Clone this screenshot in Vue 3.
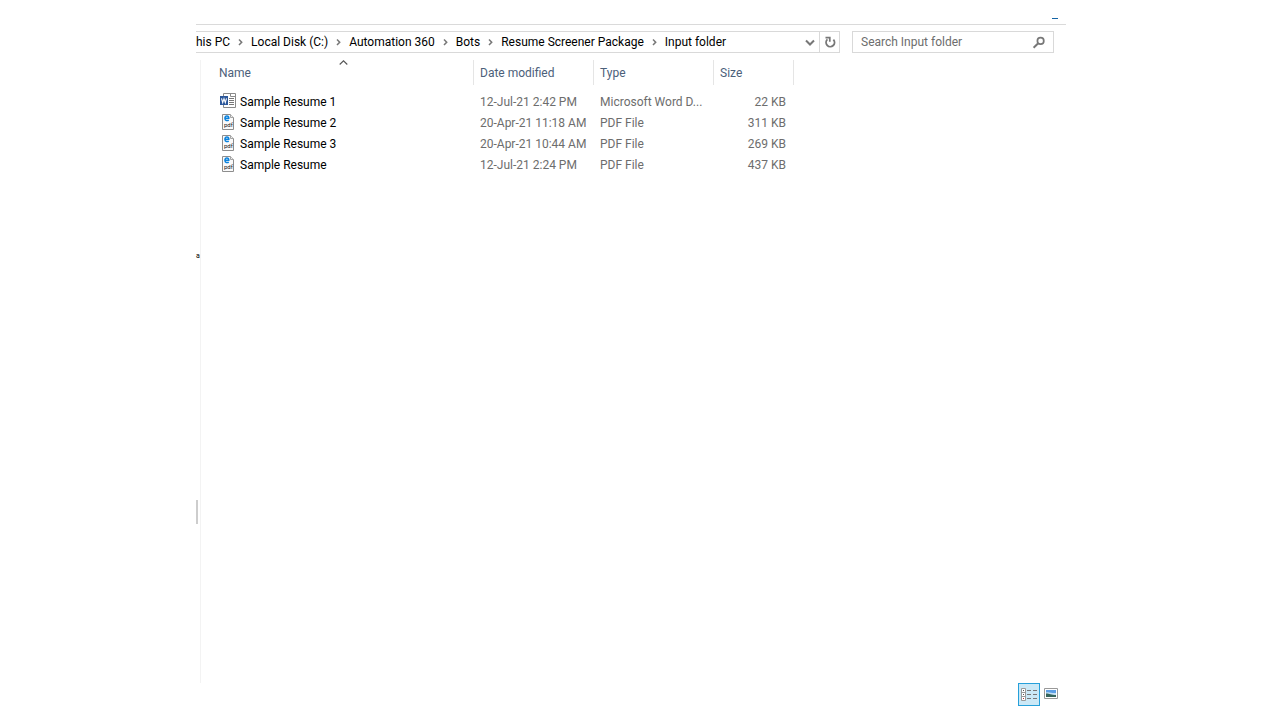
<script setup>
import { ref } from 'vue'

const crumbs = ['his PC', 'Local Disk (C:)', 'Automation 360', 'Bots', 'Resume Screener Package', 'Input folder']
const search = ref('')
const view = ref('details')
const files = [
  { name: 'Sample Resume 1', icon: 'word', date: '12-Jul-21 2:42 PM', type: 'Microsoft Word D...', size: '22 KB' },
  { name: 'Sample Resume 2', icon: 'pdf', date: '20-Apr-21 11:18 AM', type: 'PDF File', size: '311 KB' },
  { name: 'Sample Resume 3', icon: 'pdf', date: '20-Apr-21 10:44 AM', type: 'PDF File', size: '269 KB' },
  { name: 'Sample Resume', icon: 'pdf', date: '12-Jul-21 2:24 PM', type: 'PDF File', size: '437 KB' }
]
</script>

<template>
  <div class="explorer">
    <header class="ribbon">
      <span class="help-edge"></span>
    </header>

    <div class="toolbar">
      <div class="address">
        <nav class="crumbs" aria-label="Path">
          <template v-for="(crumb, i) in crumbs" :key="crumb">
            <svg v-if="i > 0" class="sep" width="7" height="8" viewBox="0 0 7 8">
              <path d="M2 1.5 4.7 4.2 2 7" fill="none" stroke="#777" stroke-width="1.5" />
            </svg>
            <a href="#" class="crumb">{{ crumb }}</a>
          </template>
        </nav>
        <button class="drop" aria-label="Previous locations">
          <svg width="10" height="8" viewBox="0 0 10 8">
            <path d="M1 2.5 5 6.5 9 2.5" fill="none" stroke="#777" stroke-width="2" />
          </svg>
        </button>
        <button class="refresh" aria-label="Refresh">
          <svg width="12" height="12" viewBox="0 0 12 12">
            <path d="M9.4 3.6A4.2 4.2 0 1 1 3.4 3.4" fill="none" stroke="#777" stroke-width="1.9" />
            <path d="M1.5 1.6H5.8V5.8" fill="none" stroke="#777" stroke-width="1.7" />
          </svg>
        </button>
      </div>
      <div class="search">
        <input v-model="search" type="text" placeholder="Search Input folder" aria-label="Search Input folder">
        <svg width="13" height="13" viewBox="0 0 13 13">
          <circle cx="8.6" cy="4.9" r="3.2" fill="none" stroke="#777" stroke-width="1.7" />
          <path d="M6.2 7.3 1.6 11.8" stroke="#777" stroke-width="2" />
        </svg>
      </div>
    </div>

    <main class="body">
      <aside class="tree">
        <span class="tree-text">a</span>
        <span class="tree-thumb"></span>
      </aside>
      <table class="files">
        <colgroup>
          <col class="col-name">
          <col class="col-date">
          <col class="col-type">
          <col class="col-size">
        </colgroup>
        <thead>
          <tr>
            <th class="name">
              Name
              <svg class="sort" width="9" height="5" viewBox="0 0 9 5">
                <path d="M.7 4.5 4.5.8 8.3 4.5" fill="none" stroke="#555" stroke-width="1.1" />
              </svg>
            </th>
            <th>Date modified</th>
            <th>Type</th>
            <th>Size</th>
          </tr>
        </thead>
        <tbody>
          <tr v-for="file in files" :key="file.name">
            <td class="name">
              <div class="file">
                <svg v-if="file.icon === 'word'" width="16" height="17" viewBox="0 0 16 17">
                  <path d="M3.5.5H11L15.5 .5V14.5H3.5Z" fill="#fff" stroke="#8a8a8a" />
                  <path d="M10.5.5V3.5H15.5" fill="none" stroke="#8a8a8a" />
                  <path d="M9 5.5H14M9 7.5H14M9 9.5H14M9 11.5H14" stroke="#777" />
                  <path d="M0 3H8V12H0Z" fill="#2b579a" />
                  <path d="M1.5 5.3 2.7 9.7 4 5.7 5.3 9.7 6.5 5.3" fill="none" stroke="#fff" stroke-width="1.1" />
                </svg>
                <svg v-else width="16" height="17" viewBox="0 0 16 17">
                  <path d="M2.5.5H10.5L13.5 3.5V15.5H2.5Z" fill="#fafafa" stroke="#8d8d8d" />
                  <path d="M10.5.5V3.5H13.5" fill="#eee" stroke="#a5a5a5" />
                  <path d="M5 4.2H8.8C8.8 1.3 4.9 1.2 4.9 4.2 4.9 6.9 7.4 6.9 8.8 6.1" fill="none" stroke="#0b82dc" stroke-width="1.5" />
                  <text x="4" y="13" font-size="6" fill="#111">pdf</text>
                </svg>
                <span>{{ file.name }}</span>
              </div>
            </td>
            <td>{{ file.date }}</td>
            <td>{{ file.type }}</td>
            <td class="size">{{ file.size }}</td>
          </tr>
        </tbody>
      </table>
    </main>

    <footer class="status">
      <button class="view" :class="{ active: view === 'details' }" aria-label="Details" @click="view = 'details'">
        <svg width="16" height="13" viewBox="0 0 16 13">
          <path d="M.5.5H4.5V12.5H.5ZM.5 4.5H4.5M.5 8.5H4.5" fill="#fff" stroke="#999" />
          <path d="M2 2H3V3H2ZM2 6H3V7H2Z" fill="#555" />
          <path d="M2 10H3V11H2Z" fill="#b33" />
          <path d="M6 2.5H10M12 2.5H16M6 6.5H10M12 6.5H16M6 10.5H10M12 10.5H16" stroke="#777" />
        </svg>
      </button>
      <button class="view" :class="{ active: view === 'large' }" aria-label="Large icons" @click="view = 'large'">
        <svg width="14" height="13" viewBox="0 0 14 13">
          <path d="M.5.5H13.5V10.5H.5Z" fill="#fff" stroke="#999" />
          <path d="M2 2H12V9H2Z" fill="#5b9ee6" />
          <path d="M2 4.5C5 3.5 8 5.5 12 5V7H2Z" fill="#c4e0f3" />
          <path d="M2 5.5C5 5.3 7 7 12 7V9H2Z" fill="#35645c" />
        </svg>
      </button>
    </footer>
  </div>
</template>

<style>
body {
  margin: 0;
  background: #fff;
}
</style>

<style scoped>
.explorer {
  display: flex;
  flex-direction: column;
  box-sizing: border-box;
  min-height: 100vh;
  padding: 0 214px 14px 196px;
  font-family: Roboto, "Open Sans", sans-serif;
  font-size: 12px;
  line-height: 16px;
  color: #000;
}
button {
  display: flex;
  align-items: center;
  justify-content: center;
  padding: 0;
  border: none;
  background: none;
}
svg {
  flex: none;
}
.ribbon {
  display: flex;
  justify-content: flex-end;
  align-items: flex-end;
  box-sizing: border-box;
  height: 25px;
  padding: 0 8px 5px 0;
  border-bottom: 1px solid #dadada;
}
.help-edge {
  width: 6px;
  height: 1px;
  background: #1464a5;
}
.toolbar {
  display: flex;
  gap: 12px;
  padding: 6px 12px 0 0;
}
.address {
  display: flex;
  flex: 1;
  box-sizing: border-box;
  height: 22px;
  border: 1px solid #d9d9d9;
  border-left: none;
}
.crumbs {
  display: flex;
  align-items: center;
  flex: 1;
  gap: 7px;
  overflow: hidden;
  white-space: nowrap;
}
.crumb {
  color: #000;
  text-decoration: none;
}
.drop {
  width: 19px;
}
.refresh {
  width: 20px;
  border-left: 1px solid #d9d9d9;
}
.search {
  display: flex;
  align-items: center;
  box-sizing: border-box;
  width: 202px;
  height: 22px;
  padding: 0 8px;
  border: 1px solid #d9d9d9;
}
.search input {
  flex: 1;
  min-width: 0;
  padding: 0;
  border: none;
  outline: none;
  font: inherit;
}
.search input::placeholder {
  color: #6d6d6d;
  opacity: 1;
}
.body {
  display: flex;
  flex: 1;
  align-items: flex-start;
  padding-top: 7px;
}
.tree {
  display: flex;
  flex-direction: column;
  align-self: stretch;
  box-sizing: border-box;
  width: 5px;
  padding-top: 188px;
  border-right: 1px solid #f3f3f3;
}
.tree-text {
  font-size: 7px;
}
.tree-thumb {
  width: 2px;
  height: 24px;
  margin-top: 236px;
  background: #cdcdcd;
}
.files {
  table-layout: fixed;
  width: 593px;
  border-spacing: 0;
  color: #6d6d6d;
}
.col-name {
  width: 273px;
}
.col-date,
.col-type {
  width: 120px;
}
.col-size {
  width: 80px;
}
th {
  position: relative;
  height: 25px;
  padding: 0 6px;
  border-right: 1px solid #e5e5e5;
  color: #4c607a;
  font-weight: 400;
  text-align: left;
}
th.name {
  padding-left: 18px;
}
.sort {
  position: absolute;
  top: 0;
  left: 138px;
}
tbody::before {
  content: "";
  display: block;
  height: 6px;
}
td {
  height: 21px;
  padding: 0 6px;
  white-space: nowrap;
}
td.name {
  padding-left: 19px;
  color: #000;
}
td.size {
  padding-right: 8px;
  text-align: right;
}
.file {
  display: flex;
  align-items: center;
  gap: 4px;
}
.status {
  display: flex;
  justify-content: flex-end;
  padding-right: 4px;
}
.view {
  box-sizing: border-box;
  width: 22px;
  height: 23px;
}
.view.active {
  border: 1px solid #26a0da;
  background: #cbe8f6;
}
</style>
